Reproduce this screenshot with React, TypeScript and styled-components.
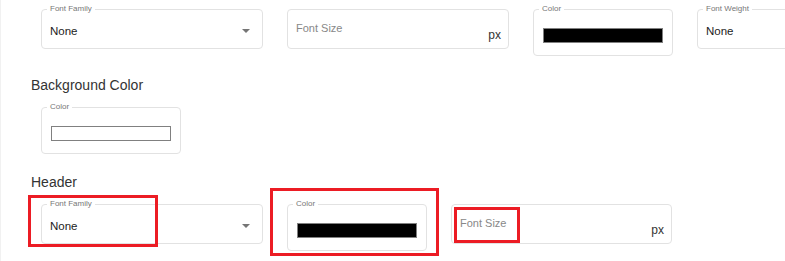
import React from "react";
import styled, { createGlobalStyle } from "styled-components";

const Global = createGlobalStyle`
  html, body { margin: 0; padding: 0; background: #fff; overflow: hidden; }
  body { font-family: "Liberation Sans", Arial, sans-serif; color: #333; }
`;

const Page = styled.div`
  width: 785px;
  height: 261px;
  box-sizing: border-box;
  padding: 9px 0 0 30px;
  border-left: 1px solid #f1f1f1;
  overflow: hidden;
`;

const Section = styled.section<{ $top: number }>`
  margin-top: ${(p) => p.$top}px;
`;

const Heading = styled.h3`
  margin: 0 0 13px 0;
  font-size: 14px;
  font-weight: 400;
  line-height: 17px;
  color: #333;
`;

const Row = styled.div`
  display: flex;
  align-items: flex-start;
  padding-left: 10px;
  gap: 24px;
  white-space: nowrap;
`;

const Box = styled.div<{ $w: number; $h: number }>`
  position: relative;
  flex: 0 0 auto;
  box-sizing: border-box;
  width: ${(p) => p.$w}px;
  height: ${(p) => p.$h}px;
  border: 1px solid #e2e2e2;
  border-radius: 4px;
  background: #fff;
`;

const SelectBox = styled(Box)`
  display: flex;
  align-items: center;
  justify-content: space-between;
  padding: 3px 12px 0 8px;
`;

const SizeBox = styled(Box)`
  display: flex;
  justify-content: space-between;
  padding: 11px 7px 6px 8px;
`;

const ColorBox = styled(Box)`
  padding: 18px 9px 0 9px;
`;

const Label = styled.span`
  position: absolute;
  left: 5px;
  top: -6px;
  padding: 0 3px;
  background: #fff;
  font-size: 8px;
  line-height: 10px;
  color: #777;
`;

const SelectValue = styled.span`
  font-size: 11.5px;
  line-height: 14px;
  color: #222;
`;

const Placeholder = styled.span`
  align-self: flex-start;
  font-size: 11px;
  line-height: 14px;
  color: #888;
`;

const Unit = styled.span`
  align-self: flex-end;
  font-size: 12px;
  line-height: 14px;
  color: #333;
`;

const Swatch = styled.div<{ $color: string }>`
  height: 15px;
  box-sizing: border-box;
  background: ${(p) => p.$color};
  border: 1px solid #808080;
`;

const Highlight = styled.div<{ $l: number; $t: number; $w: number; $h: number }>`
  position: absolute;
  left: ${(p) => p.$l}px;
  top: ${(p) => p.$t}px;
  width: ${(p) => p.$w}px;
  height: ${(p) => p.$h}px;
  box-sizing: border-box;
  border: 3px solid #ec1c24;
  pointer-events: none;
  z-index: 2;
`;

type HL = { l: number; t: number; w: number; h: number };

const Mark = ({ hl }: { hl?: HL }) =>
  hl ? <Highlight $l={hl.l} $t={hl.t} $w={hl.w} $h={hl.h} /> : null;

const SelectField = ({ label, value, width, hl }: { label: string; value: string; width: number; hl?: HL }) => (
  <SelectBox $w={width} $h={40}>
    <Label>{label}</Label>
    <SelectValue>{value}</SelectValue>
    <svg width="8" height="4" viewBox="0 0 8 4">
      <path d="M0 0 L8 0 L4 4 Z" fill="#757575" />
    </svg>
    <Mark hl={hl} />
  </SelectBox>
);

const SizeField = ({ width, hl }: { width: number; hl?: HL }) => (
  <SizeBox $w={width} $h={40}>
    <Placeholder>Font Size</Placeholder>
    <Unit>px</Unit>
    <Mark hl={hl} />
  </SizeBox>
);

const ColorField = ({ color, hl }: { color: string; hl?: HL }) => (
  <ColorBox $w={140} $h={47}>
    <Label>Color</Label>
    <Swatch $color={color} />
    <Mark hl={hl} />
  </ColorBox>
);

export default function App() {
  return (
    <>
      <Global />
      <Page>
        <Row>
          <SelectField label="Font Family" value="None" width={222} />
          <SizeField width={222} />
          <ColorField color="#000" />
          <SelectField label="Font Weight" value="None" width={222} />
        </Row>

        <Section $top={21}>
          <Heading>Background Color</Heading>
          <Row>
            <ColorField color="#fff" />
          </Row>
        </Section>

        <Section $top={20}>
          <Heading>Header</Heading>
          <Row>
            <SelectField
              label="Font Family"
              value="None"
              width={222}
              hl={{ l: -14, t: -10, w: 130, h: 52 }}
            />
            <ColorField color="#000" hl={{ l: -18, t: -17, w: 169, h: 68 }} />
            <SizeField width={221} hl={{ l: 2, t: 2, w: 66, h: 36 }} />
          </Row>
        </Section>
      </Page>
    </>
  );
}
